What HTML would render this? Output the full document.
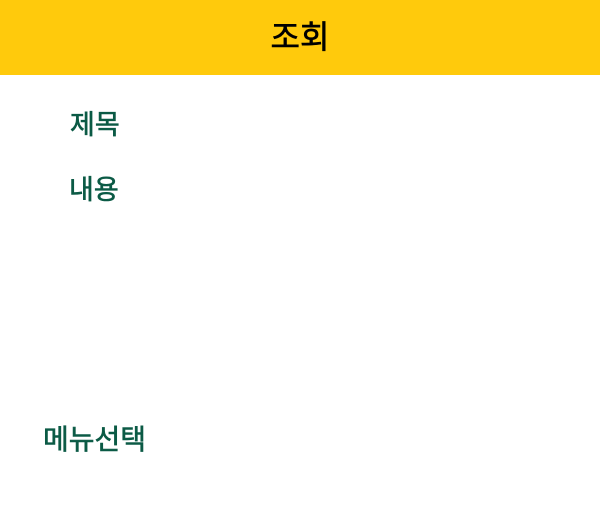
<!DOCTYPE html>
<html><head><meta charset="utf-8"><style>
body{margin:0;width:600px;height:525px;background:#fff;position:relative;overflow:hidden;font-family:"Liberation Sans","Noto Sans CJK KR",sans-serif}
.h{position:absolute;left:0;top:0;width:600px;height:75px;background:#FFCA0C}
.t{position:absolute;left:0;width:600px;top:17px;text-align:center;font-size:32px;line-height:40px;color:#000;-webkit-text-stroke:0.6px #000}
.l{position:absolute;font-size:27px;line-height:30px;color:#0b5a45;white-space:nowrap;-webkit-text-stroke:0.6px #0b5a45}
</style></head><body>
<div class="h"></div>
<div class="t">조회</div>
<div class="l" style="left:70px;top:110px">제목</div>
<div class="l" style="left:69px;top:175px">내용</div>
<div class="l" style="left:43px;top:425px;font-size:28px">메뉴선택</div>
</body></html>
